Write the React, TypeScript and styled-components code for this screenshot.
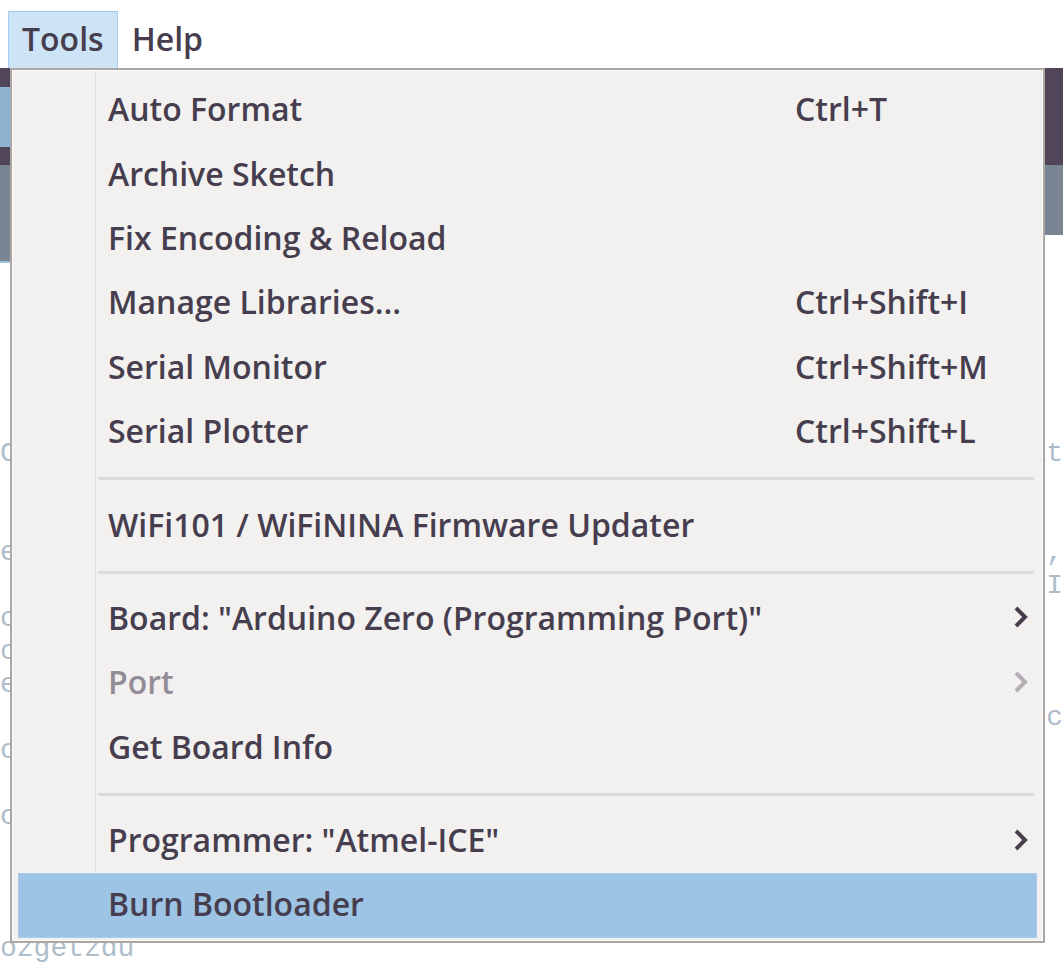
import styled, { createGlobalStyle } from "styled-components";

const Global = createGlobalStyle`
  html, body {
    margin: 0;
    padding: 0;
    background: #ffffff;
    overflow: hidden;
  }
  body {
    font-family: "Open Sans", "Noto Sans", sans-serif;
  }
`;

const Page = styled.div`
  position: relative;
  width: 1063px;
  height: 964px;
  overflow: hidden;
  background: #ffffff;
`;

const MenuBar = styled.div`
  display: flex;
  align-items: stretch;
  height: 68px;
  padding: 11px 0 0 8px;
  box-sizing: border-box;
  background: #ffffff;
`;

const BarItem = styled.div<{ $open?: boolean }>`
  display: flex;
  align-items: center;
  padding: 0 13px 4px;
  font-size: 32px;
  font-weight: 600;
  color: #463e4e;
  border: 1px solid ${(p) => (p.$open ? "#a6cbee" : "transparent")};
  border-bottom: none;
  background: ${(p) => (p.$open ? "#cde4f7" : "transparent")};
`;

const Toolbar = styled.div`
  height: 97px;
  background: #514659;
  display: flex;
  align-items: center;
`;

const ToolButton = styled.div`
  width: 60px;
  height: 60px;
  margin-left: -50px;
  background: #8db3d1;
`;

const TabBar = styled.div`
  height: 98px;
  display: flex;
  align-items: flex-start;
`;

const ActiveTab = styled.div`
  width: 200px;
  height: 96px;
  background: #7a8593;
  border-bottom: 2px solid #9fc0dc;
`;

const TabStrip = styled.div`
  flex: 1;
  height: 70px;
  background: #7a8593;
`;

const Code = styled.div`
  padding-top: 9px;
  font-family: "Liberation Mono", monospace;
  font-size: 28px;
  color: #aebdcb;
`;

const CodeLine = styled.div`
  display: flex;
  justify-content: space-between;
  height: 33px;
  line-height: 33px;
  white-space: pre;
`;

const Menu = styled.div`
  position: absolute;
  left: 10px;
  top: 68px;
  width: 1035px;
  height: 875px;
  box-sizing: border-box;
  border: 2px solid #aca7a3;
  box-shadow: inset 0 0 0 1px #fbfbfb;
  background: linear-gradient(
      to right,
      transparent 83px,
      #e3e1e0 83px,
      #e3e1e0 84px,
      transparent 84px
    ),
    #f2f1f0;
  padding: 8px 0 0;
  display: flex;
  flex-direction: column;
`;

const Item = styled.div<{ $active?: boolean; $disabled?: boolean }>`
  display: grid;
  grid-template-columns: 687px 1fr 20px;
  align-items: center;
  height: 64.4px;
  margin: 0 6px;
  padding: 0 4px 3px 90px;
  box-sizing: border-box;
  font-size: 32px;
  font-weight: 600;
  color: ${(p) => (p.$disabled ? "#928d96" : "#463e4e")};
  background: ${(p) => (p.$active ? "#9dc4e4" : "transparent")};
  box-shadow: ${(p) => (p.$active ? "inset 0 0 0 1px #a9cdea" : "none")};
`;

const Shortcut = styled.span`
  white-space: nowrap;
  word-spacing: 2px;
`;

const Separator = styled.div`
  height: 29px;
  display: flex;
  align-items: center;
  padding: 0 9px 0 86px;

  &::after {
    content: "";
    flex: 1;
    height: 3px;
    background: #dcdbda;
  }
`;

function Chevron({ color }: { color: string }) {
  return (
    <svg width="16" height="26" viewBox="0 0 16 26">
      <polyline
        points="3,4 12,13 3,22"
        fill="none"
        stroke={color}
        strokeWidth="4"
        strokeLinejoin="miter"
      />
    </svg>
  );
}

type Entry =
  | { sep: true }
  | { label: string; shortcut?: string; sub?: boolean; disabled?: boolean; active?: boolean };

const entries: Entry[] = [
  { label: "Auto Format", shortcut: "Ctrl+T" },
  { label: "Archive Sketch" },
  { label: "Fix Encoding & Reload" },
  { label: "Manage Libraries...", shortcut: "Ctrl+Shift+I" },
  { label: "Serial Monitor", shortcut: "Ctrl+Shift+M" },
  { label: "Serial Plotter", shortcut: "Ctrl+Shift+L" },
  { sep: true },
  { label: "WiFi101 / WiFiNINA Firmware Updater" },
  { sep: true },
  { label: "Board: \"Arduino Zero (Programming Port)\"", sub: true },
  { label: "Port", sub: true, disabled: true },
  { label: "Get Board Info" },
  { sep: true },
  { label: "Programmer: \"Atmel-ICE\"", sub: true },
  { label: "Burn Bootloader", active: true },
];

// bits of the sketch behind the menu that still show at its edges
const codeLines: [string, string][] = [
  ["", ""],
  ["", ""],
  ["", ""],
  ["", ""],
  ["", ""],
  ["C", "at"],
  ["", ""],
  ["", ""],
  ["e", "9,"],
  ["", "I"],
  ["c", ""],
  ["c", ""],
  ["e", ""],
  ["", "c"],
  ["c", ""],
  ["", ""],
  ["c", ""],
  ["", ""],
  ["", ""],
  ["", ""],
  ["ozgetzdu", ""],
];

export default function App() {
  return (
    <Page>
      <Global />
      <MenuBar>
        <BarItem $open>Tools</BarItem>
        <BarItem>Help</BarItem>
      </MenuBar>
      <Toolbar>
        <ToolButton />
      </Toolbar>
      <TabBar>
        <ActiveTab />
        <TabStrip />
      </TabBar>
      <Code>
        {codeLines.map(([l, r], i) => (
          <CodeLine key={i}>
            <span>{l}</span>
            <span>{r}</span>
          </CodeLine>
        ))}
      </Code>

      <Menu>
        {entries.map((e, i) =>
          "sep" in e ? (
            <Separator key={i} />
          ) : (
            <Item key={i} $active={e.active} $disabled={e.disabled}>
              <span>{e.label}</span>
              <Shortcut>{e.shortcut}</Shortcut>
              {e.sub ? <Chevron color={e.disabled ? "#b3aeb5" : "#463e4e"} /> : <span />}
            </Item>
          )
        )}
      </Menu>
    </Page>
  );
}
